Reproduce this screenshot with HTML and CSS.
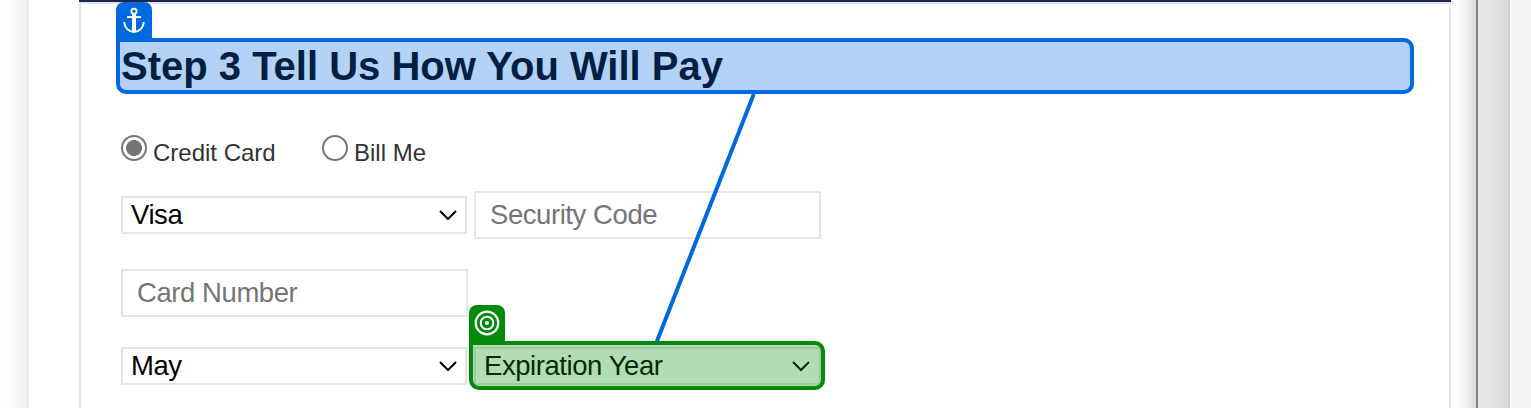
FILE: index.html
```html
<!DOCTYPE html>
<html lang="en">
<head>
<meta charset="utf-8">
<title>Payment</title>
<link rel="stylesheet" href="styles.css">
</head>
<body>
<div class="page">
  <div class="shade-left"></div>
  <main class="panel">
    <h1 class="anchor-box">
      <span class="tag tag-anchor">
        <svg width="36" height="37" viewBox="0 0 36 37" fill="none" stroke="#fff">
          <circle cx="18" cy="9.200" r="2.600" stroke-width="1.900"/>
          <path d="M18 12v18" stroke-width="4"/>
          <path d="M11 15.100h14" stroke-width="2"/>
          <path d="M8.200 20c.3 5.800 4.600 9.900 9.800 9.900s9.500-4.100 9.800-9.900" stroke-width="2"/>
        </svg>
      </span>
      <span class="heading">Step 3 Tell Us How You Will Pay</span>
    </h1>
    <form class="form">
      <div class="methods">
        <label class="method method-card"><span class="radio radio-on"></span><span>Credit Card</span></label>
        <label class="method"><span class="radio"></span><span>Bill Me</span></label>
      </div>
      <div class="row row-type">
        <div class="select"><span>Visa</span><svg class="chevron" width="20" height="12" viewBox="0 0 20 12"><path d="M2 2l8 8 8-8"/></svg></div>
        <div class="input code">Security Code</div>
      </div>
      <div class="row row-number"><div class="input">Card Number</div></div>
      <div class="row row-expiry">
        <div class="select"><span>May</span><svg class="chevron" width="20" height="12" viewBox="0 0 20 12"><path d="M2 2l8 8 8-8"/></svg></div>
        <div class="select year"><span>Expiration Year</span><svg class="chevron" width="20" height="12" viewBox="0 0 20 12"><path d="M2 2l8 8 8-8"/></svg>
          <div class="target-box">
            <span class="tag tag-target">
              <svg width="36" height="37" viewBox="0 0 36 37" fill="none" stroke="#fff">
                <circle cx="18" cy="18" r="11.300" stroke-width="2.200"/>
                <circle cx="18" cy="18" r="6.300" stroke-width="2"/>
                <circle cx="18" cy="18" r="2.100" fill="#fff" stroke="none"/>
              </svg>
            </span>
          </div>
        </div>
      </div>
    </form>
  </main>
  <div class="shade-right"></div>
  <div class="divider"></div>
  <div class="track"></div>
  <div class="edge"></div>
  <svg class="link" width="1531" height="408"><path d="M753.800 94L656.800 341.500"/></svg>
</div>
</body>
</html>
```
FILE: styles.css
```css
* { box-sizing: border-box; }
body {
  margin: 0;
  overflow: hidden;
  background: #fff;
  font-family: "Liberation Sans", Arial, sans-serif;
}
.page { position: relative; display: flex; width: 1531px; height: 408px; }
.shade-left {
  width: 29px;
  margin-right: 50px;
  background: linear-gradient(90deg, #fff 0, #fdfdfd 35%, #f6f6f6 70%, #ebebeb 100%);
}
.panel {
  width: 1372px;
  margin-top: 2px;
  padding: 34px 35px 0;
  border: 2px solid #e5e5e5;
  border-bottom: 0;
}
.page::before {
  content: "";
  position: absolute;
  left: 79px;
  top: 0;
  width: 1372px;
  height: 2px;
  background: #20224f;
}
.anchor-box {
  position: relative;
  display: flex;
  align-items: center;
  width: 1298px;
  height: 56px;
  margin: 0;
  padding-left: 1px;
  border: 4px solid #0069e0;
  border-radius: 0 10px 10px 10px;
  background: #b3d2f6;
}
.heading {
  color: #001f43;
  font-size: 40px;
  line-height: 46px;
  white-space: nowrap;
}
.tag {
  position: absolute;
  left: -4px;
  top: -40px;
  width: 36px;
  height: 37px;
  border-radius: 8px 8px 0 0;
}
.tag svg { display: block; }
.tag-anchor { background: #0069e0; }
.tag-target { background: #048a0b; }
.form { padding-left: 5px; }
.methods { display: flex; height: 27px; margin-top: 41px; }
.method {
  display: flex;
  gap: 6px;
  color: #333;
  font-size: 24px;
  line-height: 35px;
  white-space: nowrap;
}
.method-card { width: 201px; }
.radio {
  width: 26px;
  height: 26px;
  border: 2px solid #767676;
  border-radius: 50%;
}
.radio-on { background: radial-gradient(circle, #767676 7.600px, #fff 8.300px); }
.row {
  display: flex;
  align-items: center;
  font-size: 27.500px;
  letter-spacing: -.430px;
}
.row-type { height: 48px; margin-top: 29px; gap: 7px; }
.row-number { margin-top: 30px; }
.row-expiry { margin-top: 30px; gap: 7px; }
.select {
  position: relative;
  display: flex;
  align-items: center;
  justify-content: space-between;
  width: 346px;
  height: 38px;
  padding: 0 7px 0 8px;
  border: 2px solid #e5e5e5;
  color: #000;
  line-height: 34px;
}
.chevron { fill: none; stroke: #000; stroke-width: 2; }
.input {
  width: 347px;
  height: 48px;
  padding-left: 14px;
  border: 2px solid #e5e5e5;
  color: #757575;
  line-height: 44px;
}
.target-box {
  position: absolute;
  left: -7px;
  top: -8px;
  width: 356px;
  height: 49px;
  border: 4px solid #048a0b;
  border-radius: 0 10px 10px 10px;
  background: rgba(4, 138, 11, .3);
}
.year { width: 347px; padding-right: 8px; }
.shade-right {
  width: 25px;
  background: linear-gradient(90deg, #fff 0, #fafafa 35%, #efefef 65%, #d9d9d9 100%);
}
.divider { width: 2px; background: #808080; }
.track {
  width: 32px;
  border-right: 2px solid #cecece;
  background: linear-gradient(90deg, #e6e6e6 0, #e4e4e4 45%, #d7d7d7 100%);
}
.edge { width: 21px; background: #f4f4f4; }
.link { position: absolute; left: 0; top: 0; pointer-events: none; }
.link path { fill: none; stroke: #0069e0; stroke-width: 4; }
```
